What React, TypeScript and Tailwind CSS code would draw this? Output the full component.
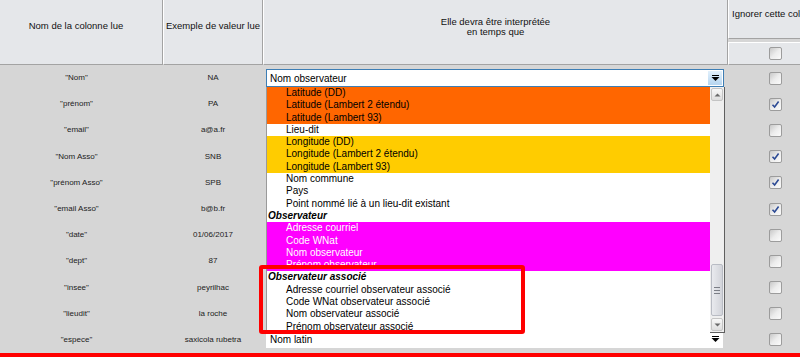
import React from 'react'

type Row = { name: string; sample: string; ignored: boolean }

const rows: Row[] = [
  { name: '"Nom"', sample: 'NA', ignored: false },
  { name: '"prénom"', sample: 'PA', ignored: true },
  { name: '"email"', sample: 'a@a.fr', ignored: false },
  { name: '"Nom Asso"', sample: 'SNB', ignored: true },
  { name: '"prénom Asso"', sample: 'SPB', ignored: true },
  { name: '"email Asso"', sample: 'b@b.fr', ignored: true },
  { name: '"date"', sample: '01/06/2017', ignored: false },
  { name: '"dept"', sample: '87', ignored: false },
  { name: '"insee"', sample: 'peyrilhac', ignored: false },
  { name: '"lieudit"', sample: 'la roche', ignored: false },
  { name: '"espece"', sample: 'saxicola rubetra', ignored: false },
]

type Option = { label: string; tone: 'orange' | 'yellow' | 'magenta' | 'plain' | 'group' }

const options: Option[] = [
  { label: 'Latitude (DD)', tone: 'orange' },
  { label: 'Latitude (Lambert 2 étendu)', tone: 'orange' },
  { label: 'Latitude (Lambert 93)', tone: 'orange' },
  { label: 'Lieu-dit', tone: 'plain' },
  { label: 'Longitude (DD)', tone: 'yellow' },
  { label: 'Longitude (Lambert 2 étendu)', tone: 'yellow' },
  { label: 'Longitude (Lambert 93)', tone: 'yellow' },
  { label: 'Nom commune', tone: 'plain' },
  { label: 'Pays', tone: 'plain' },
  { label: 'Point nommé lié à un lieu-dit existant', tone: 'plain' },
  { label: 'Observateur', tone: 'group' },
  { label: 'Adresse courriel', tone: 'magenta' },
  { label: 'Code WNat', tone: 'magenta' },
  { label: 'Nom observateur', tone: 'magenta' },
  { label: 'Prénom observateur', tone: 'magenta' },
  { label: 'Observateur associé', tone: 'group' },
  { label: 'Adresse courriel observateur associé', tone: 'plain' },
  { label: 'Code WNat observateur associé', tone: 'plain' },
  { label: 'Nom observateur associé', tone: 'plain' },
  { label: 'Prénom observateur associé', tone: 'plain' },
]

const toneClass = {
  orange: 'bg-[#ff6600] text-black pl-[19px]',
  yellow: 'bg-[#ffcc00] text-black pl-[19px]',
  magenta: 'bg-[#ff00ff] text-white pl-[19px]',
  plain: 'bg-white text-black pl-[19px]',
  group: 'bg-white text-black pl-[1px] font-bold italic',
}

function Checkbox({ checked }: { checked: boolean }) {
  return (
    <div className="flex h-[13px] w-[13px] items-center justify-center rounded-[2px] border border-[#9c9c9c] bg-linear-to-br from-[#c8c8c8] via-[#ececec] to-[#fbfbfb]">
      {checked && (
        <svg width="9" height="9" viewBox="0 0 9 9">
          <path d="M1.5 4.8 L3.6 7 L7.6 1.6" fill="none" stroke="#2c4a94" strokeWidth="1.6" />
        </svg>
      )}
    </div>
  )
}

function ArrowDown() {
  return (
    <svg width="9" height="7" viewBox="0 0 9 7">
      <rect x="1" y="0" width="7" height="1" fill="#000" />
      <path d="M0.5 2 L8.5 2 L4.5 6 Z" fill="#000" />
    </svg>
  )
}

function ScrollButton({ up }: { up?: boolean }) {
  return (
    <div className="mx-[1px] flex h-[13px] items-center justify-center rounded-[2px] border border-[#c4c4c4] bg-linear-to-b from-[#f8f8f8] to-[#dedede]">
      <svg width="7" height="4" viewBox="0 0 7 4">
        <path d={up ? 'M0.5 3.5 L6.5 3.5 L3.5 0.5 Z' : 'M0.5 0.5 L6.5 0.5 L3.5 3.5 Z'} fill="#6a6a6a" />
      </svg>
    </div>
  )
}

export default function App() {
  return (
    <div className="relative h-[357px] w-[800px] overflow-hidden bg-[#d6d6d6] font-['Liberation_Sans',Arial,sans-serif]">
      {/* header */}
      <div className="grid h-[65px] grid-cols-[163px_100px_465px_72px] text-[9.5px] text-[#111]">
        <div className="flex items-center justify-center border-r border-b border-[#a3a3a3] bg-[#e5e7ea] pr-[10px] pb-[11px]">
          Nom de la colonne lue
        </div>
        <div className="flex items-center justify-center border-r border-b border-l border-[#a3a3a3] border-l-white bg-[#e5e7ea] pb-[11px]">
          Exemple de valeur lue
        </div>
        <div className="flex flex-col items-center justify-center border-r border-b border-l border-[#a3a3a3] border-l-white bg-[#e5e7ea] pb-[10px] leading-[10.5px]">
          <span>Elle devra être interprétée</span>
          <span>en temps que</span>
        </div>
        <div className="flex flex-col gap-[3px]">
          <div className="flex h-[39px] items-center whitespace-nowrap border-b border-l border-[#a3a3a3] border-l-white bg-[#e5e7ea] pb-[9px] pl-[3px]">
            Ignorer cette colonne
          </div>
          <div className="flex flex-1 items-center border-b border-l border-t border-[#a3a3a3] border-l-white border-t-white bg-[#e5e7ea] pl-[40px]">
            <Checkbox checked={false} />
          </div>
        </div>
      </div>

      {/* rows */}
      <div className="flex flex-col">
        {rows.map((row, i) => (
          <div key={row.name} className="grid h-[26.2px] grid-cols-[163px_100px_465px_72px] items-center text-[8px] text-[#222]">
            <div className="text-center pr-[10px]">{row.name}</div>
            <div className="text-center">{row.sample}</div>
            <div className="pl-[3px]">
              {i === 0 && (
                <div className="flex h-[18px] w-[458px] items-center justify-between border border-[#3d7eb5] bg-white pl-[3px] text-[10px] text-black">
                  <span>Nom observateur</span>
                  <div className="mr-[1px] flex h-[14px] w-[14px] items-center justify-center bg-linear-to-b from-[#e3f1fc] to-[#b5d5f0]">
                    <ArrowDown />
                  </div>
                </div>
              )}
              {i === rows.length - 1 && (
                <div className="mt-[-1px] flex h-[17px] w-[457px] items-center justify-between bg-white pl-[4px] pr-[3px] text-[10px] text-black">
                  <span>Nom latin</span>
                  <ArrowDown />
                </div>
              )}
            </div>
            <div className="pl-[41px]">
              <Checkbox checked={row.ignored} />
            </div>
          </div>
        ))}
      </div>
      <div className="h-[4px] bg-[#ff0000]" />

      {/* open dropdown list */}
      <div className="absolute left-[266px] top-[87px] flex h-[246px] w-[459px] border-l border-r border-b border-l-[#9a9a9a] border-r-[#5f5f5f] border-b-[#5f5f5f] bg-white">
        <div className="flex-1 text-[10px]">
          {options.map((o) => (
            <div key={o.label} className={`h-[12.3px] whitespace-nowrap leading-[12.3px] ${toneClass[o.tone]}`}>
              {o.label}
            </div>
          ))}
        </div>
        <div className="flex w-[14px] flex-col bg-[#efefef] pt-[1px] pb-[1px]">
          <ScrollButton up />
          <div className="flex-1" />
          <div className="mx-[1px] flex h-[52px] flex-col items-center justify-center gap-[2px] rounded-[2px] border border-[#b9bcc4] bg-linear-to-r from-[#e9eaee] to-[#d2d4da]">
            <div className="h-[1px] w-[6px] bg-[#7b7e86]" />
            <div className="h-[1px] w-[6px] bg-[#7b7e86]" />
            <div className="h-[1px] w-[6px] bg-[#7b7e86]" />
          </div>
          <div className="h-[2px]" />
          <ScrollButton />
        </div>
      </div>

      {/* highlight frame */}
      <div className="absolute left-[259px] top-[265px] h-[69px] w-[266px] rounded-[3px] border-[4px] border-[#ff0000]" />
    </div>
  )
}
